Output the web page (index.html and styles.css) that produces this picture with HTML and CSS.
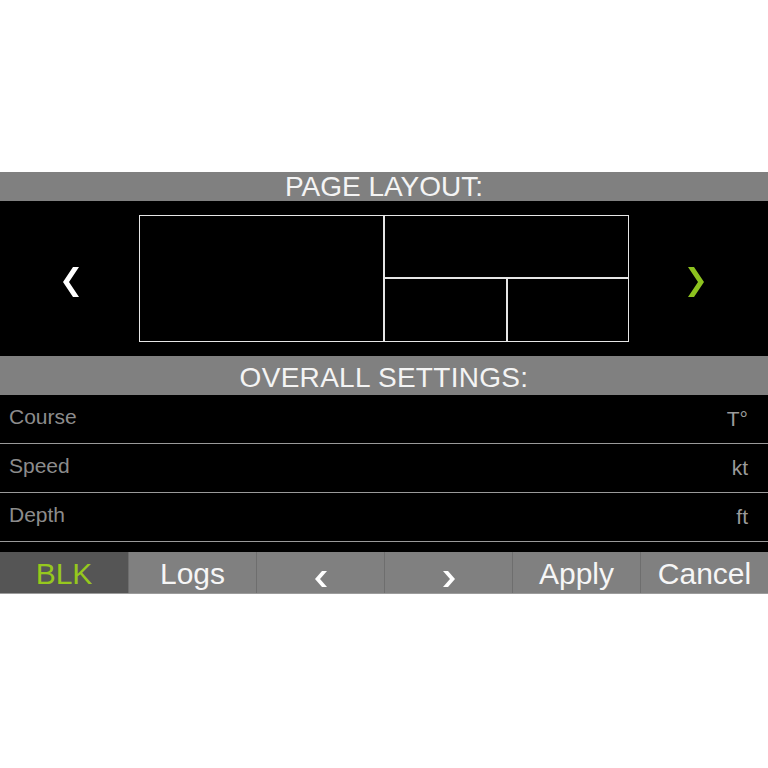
FILE: index.html
```html
<!DOCTYPE html>
<html>
<head>
<meta charset="utf-8">
<link rel="stylesheet" href="styles.css">
</head>
<body>
<div class="panel">
  <div class="hdr hdr1">PAGE LAYOUT:</div>
  <div class="layout-area">
    <div class="nav nav-left">
      <svg class="chev" width="16" height="30" viewBox="0 0 16 30"><polygon points="10,0 16,0 6,15 16,30 10,30 0,15" fill="#ffffff"/></svg>
    </div>
    <div class="layout-box">
      <div class="cell big"></div>
      <div class="cell top"></div>
      <div class="cell"></div>
      <div class="cell"></div>
    </div>
    <div class="nav nav-right">
      <svg class="chev" width="16" height="30" viewBox="0 0 16 30"><polygon points="6,0 0,0 10,15 0,30 6,30 16,15" fill="#8dc21f"/></svg>
    </div>
  </div>
  <div class="hdr hdr2">OVERALL SETTINGS:</div>
  <div class="rows">
    <div class="row"><span class="label">Course</span><span class="unit">T°</span></div>
    <div class="row"><span class="label">Speed</span><span class="unit">kt</span></div>
    <div class="row"><span class="label">Depth</span><span class="unit">ft</span></div>
  </div>
  <div class="gap"></div>
  <div class="buttons">
    <div class="btn btn-active">BLK</div>
    <div class="btn">Logs</div>
    <div class="btn"><svg class="small-chev" width="12" height="16" viewBox="0 0 12 16"><polygon points="7,0 12,0 5,8 12,16 7,16 0,8" fill="#ffffff"/></svg></div>
    <div class="btn"><svg class="small-chev" width="12" height="16" viewBox="0 0 12 16"><polygon points="5,0 0,0 7,8 0,16 5,16 12,8" fill="#ffffff"/></svg></div>
    <div class="btn">Apply</div>
    <div class="btn">Cancel</div>
  </div>
</div>
</body>
</html>
```
FILE: styles.css
```css
* { box-sizing: border-box; }
html, body {
  margin: 0;
  padding: 0;
  background: #ffffff;
  font-family: "Liberation Sans", Arial, sans-serif;
}
.panel {
  margin-top: 172px;
  width: 768px;
}
.hdr {
  background: #808080;
  color: #f4f4f4;
  text-align: center;
  font-size: 28px;
}
.hdr1 {
  height: 29px;
  line-height: 29px;
}
.hdr2 {
  height: 39px;
  padding-top: 5px;
  line-height: 34px;
  letter-spacing: 0.3px;
}
.layout-area {
  background: #000;
  height: 155px;
  display: flex;
  align-items: center;
}
.nav {
  width: 139px;
  height: 100%;
  display: flex;
  align-items: center;
}
.nav-left { padding-left: 63px; }
.nav-right { padding-left: 59px; }
.chev { display: block; margin-top: 6px; }
.layout-box {
  width: 490px;
  height: 127px;
  background: #e6e6e6;
  padding: 1px;
  display: grid;
  grid-template-columns: 243px 121px 120px;
  grid-template-rows: 61px 62px;
  gap: 2px;
}
.cell { background: #000; }
.cell.big { grid-row: 1 / 3; }
.cell.top { grid-column: 2 / 4; }
.rows { background: #000; }
.row {
  height: 49px;
  border-bottom: 1px solid #9a9a9a;
  display: flex;
  justify-content: space-between;
  padding: 0 20px 0 9px;
  font-size: 21px;
  line-height: 44px;
}
.label { color: #8c8c8c; }
.unit { color: #9a9a9a; padding-top: 2px; }
.gap {
  height: 10px;
  background: #000;
}
.buttons {
  display: flex;
  height: 42px;
  border-bottom: 1px solid #9c9c9c;
  background: #808080;
}
.btn {
  width: 128px;
  height: 41px;
  background: #808080;
  color: #f6f6f6;
  font-size: 30px;
  line-height: 39px;
  padding-top: 2px;
  text-align: center;
  border-left: 1px solid #6e6e6e;
  display: flex;
  justify-content: center;
  align-items: flex-start;
}
.btn:first-child { border-left: none; }
.btn-active {
  background: #555555;
  color: #96c81e;
}
.small-chev {
  display: block;
  margin-top: 17px;
}
```
